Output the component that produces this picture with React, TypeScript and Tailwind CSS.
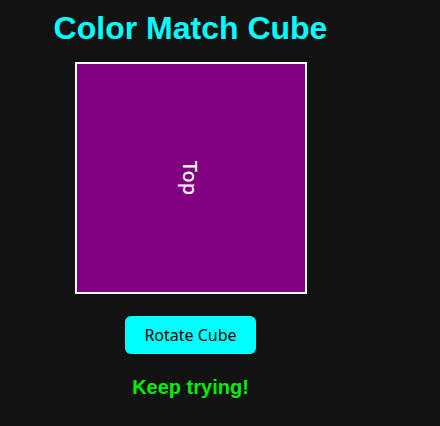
import React from "react";

export default function App() {
  return (
    <div className="min-h-[426px] w-[440px] bg-[#121212]">
      <div className="flex w-[381px] flex-col items-center">
        <h1 className="mt-[10px] font-['Liberation_Sans',Arial,sans-serif] text-[32px] font-bold leading-[36px] text-[#00ffff]">
          Color Match Cube
        </h1>
        <div className="mt-[16px] flex h-[232px] w-[232px] items-center justify-center border-2 border-white bg-[#800080]">
          <span className="rotate-90 font-['Noto_Sans',sans-serif] text-[20px] font-medium leading-none text-white">
            Top
          </span>
        </div>
        <button className="mt-[22px] flex h-[38px] w-[131px] items-center justify-center rounded-[6px] bg-[#00ffff] font-['Noto_Sans',sans-serif] text-[16px] text-black">
          Rotate Cube
        </button>
        <p className="mt-[21px] font-['Liberation_Sans',Arial,sans-serif] text-[20px] font-bold leading-[24px] text-[#00ee00]">
          Keep trying!
        </p>
      </div>
    </div>
  );
}
